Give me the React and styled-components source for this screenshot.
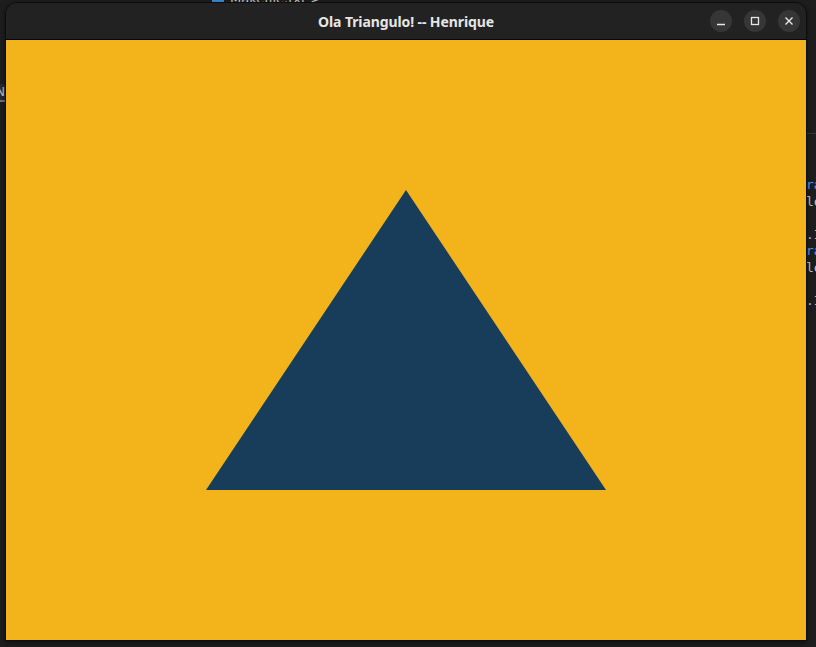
import styled, { createGlobalStyle } from "styled-components";

const GlobalStyle = createGlobalStyle`
  html, body {
    margin: 0;
    padding: 0;
    background: #1a1a1b;
  }
  body {
    font-family: "Noto Sans", "DejaVu Sans", sans-serif;
  }
`;

const Desktop = styled.div`
  position: relative;
  width: 816px;
  height: 647px;
  overflow: hidden;
  background: #1a1a1b;
`;

// editor behind the window, only slivers visible
const Editor = styled.div`
  position: absolute;
  inset: 0;
  background: #1e1e1e;
`;

const TabLabel = styled.div`
  position: absolute;
  left: 212px;
  top: -9px;
  display: flex;
  align-items: center;
  gap: 6px;
  font-family: "DejaVu Sans", sans-serif;
  font-size: 13px;
  color: #cfcfcf;

  .icon {
    width: 12px;
    height: 12px;
    background: #3d8fd6;
  }
`;

const SideBand = styled.div`
  position: absolute;
  left: 0;
  top: 84px;
  width: 8px;
  height: 16px;
  background: #2a2a33;
  border-bottom: 2px solid #777;
  font-family: "DejaVu Sans", sans-serif;
  font-size: 12px;
  line-height: 16px;
  color: #c8c8c8;
  span { margin-left: -4px; }
`;

const RuleLine = styled.div`
  position: absolute;
  left: 800px;
  top: 133px;
  width: 20px;
  height: 1px;
  background: #3a3a3a;
`;

const CodeLines = styled.div`
  position: absolute;
  left: 806px;
  top: 177px;
  font-family: "DejaVu Sans Mono", monospace;
  font-size: 13px;
  line-height: 16.6px;
  white-space: pre;
`;

const Code = styled.div`
  color: ${(p) => p.$color || "#cccccc"};
`;

const Window = styled.div`
  position: absolute;
  left: 5px;
  top: 2px;
  width: 800px;
  border: 1px solid #0c0c0c;
  border-radius: 12px 12px 0 0;
  background: #222222;
  box-shadow: 0 2px 6px rgba(0, 0, 0, 0.5);
  overflow: hidden;
`;

const TitleBar = styled.div`
  height: 36px;
  display: grid;
  grid-template-columns: 1fr auto 1fr;
  align-items: center;
  padding: 0 6px;
  background: #222222;
  border-bottom: 1px solid #050505;
`;

const Title = styled.div`
  grid-column: 2;
  font-family: "Noto Sans", sans-serif;
  font-weight: 700;
  font-size: 14px;
  color: #e6e6e6;
  letter-spacing: -0.1px;
`;

const Controls = styled.div`
  grid-column: 3;
  justify-self: end;
  display: flex;
  gap: 12px;
`;

const CtrlButton = styled.div`
  width: 22px;
  height: 22px;
  border-radius: 50%;
  background: #363636;
  display: flex;
  align-items: center;
  justify-content: center;
`;

const Canvas = styled.div`
  width: 800px;
  height: 600px;
  background: #f3b31b;

  svg {
    display: block;
  }
`;

const App = () => {
  return (
    <>
      <GlobalStyle />
      <Desktop>
        <Editor>
          <TabLabel>
            <span className="icon" />
            <span>Makefile.txt &gt;</span>
          </TabLabel>
          <SideBand>
            <span>N</span>
          </SideBand>
          <RuleLine />
          <CodeLines>
            <Code $color="#4fa1ff">ra</Code>
            <Code $color="#c8c8c8">lo</Code>
            <Code> </Code>
            <Code $color="#b9b9ff">.I</Code>
            <Code $color="#4fa1ff">ra</Code>
            <Code $color="#c8c8c8">lo</Code>
            <Code> </Code>
            <Code $color="#b9b9ff">.I</Code>
          </CodeLines>
        </Editor>

        <Window>
          <TitleBar>
            <Title>Ola Triangulo! -- Henrique</Title>
            <Controls>
              <CtrlButton>
                <svg width="10" height="10" viewBox="0 0 10 10">
                  <line x1="1" y1="8.5" x2="9" y2="8.5" stroke="#e8e8e8" strokeWidth="1.3" />
                </svg>
              </CtrlButton>
              <CtrlButton>
                <svg width="10" height="10" viewBox="0 0 10 10">
                  <rect x="1.5" y="1.5" width="7" height="7" fill="none" stroke="#e8e8e8" strokeWidth="1.3" />
                </svg>
              </CtrlButton>
              <CtrlButton>
                <svg width="10" height="10" viewBox="0 0 10 10">
                  <path d="M1.5 1.5 L8.5 8.5 M8.5 1.5 L1.5 8.5" stroke="#e8e8e8" strokeWidth="1.4" />
                </svg>
              </CtrlButton>
            </Controls>
          </TitleBar>
          <Canvas>
            <svg width="800" height="600" viewBox="0 0 800 600">
              <polygon points="400,150 600,450 200,450" fill="#183d5a" />
            </svg>
          </Canvas>
        </Window>
      </Desktop>
    </>
  );
};

export default App;
